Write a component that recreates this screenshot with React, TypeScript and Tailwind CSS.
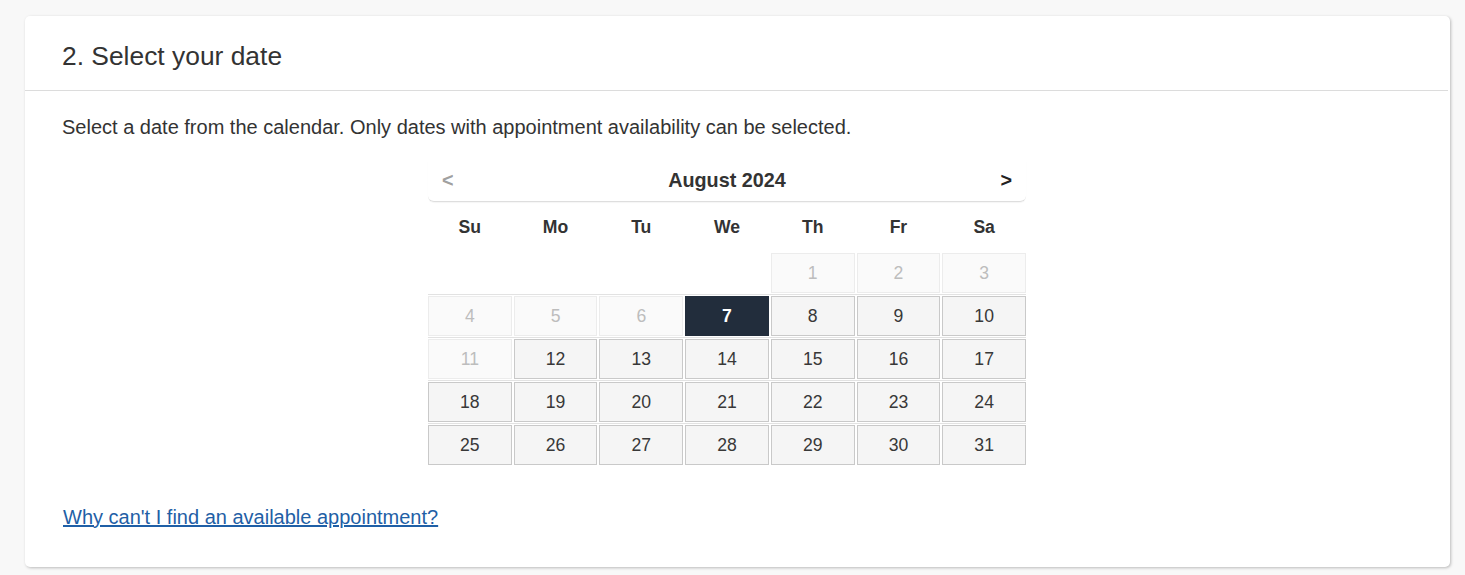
import React from "react";

type Cell = { d: number | null; state: "empty" | "disabled" | "avail" | "selected" };

const rows: Cell[][] = (() => {
  const out: Cell[][] = [];
  const cells: Cell[] = [];
  for (let i = 0; i < 4; i++) cells.push({ d: null, state: "empty" });
  for (let d = 1; d <= 31; d++) {
    let state: Cell["state"] = "avail";
    if (d <= 6 || d === 11) state = "disabled";
    if (d === 7) state = "selected";
    cells.push({ d, state });
  }
  for (let i = 0; i < cells.length; i += 7) out.push(cells.slice(i, i + 7));
  return out;
})();

const days = ["Su", "Mo", "Tu", "We", "Th", "Fr", "Sa"];

function DayCell({ c }: { c: Cell }) {
  if (c.state === "empty") return <div className="h-[40px]" />;
  if (c.state === "disabled")
    return (
      <div className="h-[40px] flex items-center justify-center border border-[#ececec] bg-[#fafafa] text-[#bdbdbd] text-[17.6px]">
        {c.d}
      </div>
    );
  if (c.state === "selected")
    return (
      <div className="h-[40px] flex items-center justify-center border border-[#222d3c] bg-[#222d3c] text-white font-bold text-[17.6px]">
        {c.d}
      </div>
    );
  return (
    <div className="h-[40px] flex items-center justify-center border border-[#c9c9c9] bg-[#f5f5f5] text-[#383838] text-[17.6px]">
      {c.d}
    </div>
  );
}

export default function App() {
  return (
    <div
      className="min-h-[575px] bg-[#f8f8f8] pt-[16px] pl-[25px] pr-[15px]"
      style={{ fontFamily: '"Liberation Sans", Arial, sans-serif' }}
    >
      <div className="w-[1425px] h-[551px] bg-white rounded-[5px] shadow-[1px_1px_3px_rgba(0,0,0,0.25)]">
        <div className="pl-[37px] pt-[25px] pb-[19px]">
          <h2 className="text-[26.4px] leading-[30px] text-[#333]">2. Select your date</h2>
        </div>
        <div className="h-px bg-[#dcdcdc] mr-[2px]" />
        <div className="pl-[37px] pt-[23px]">
          <p className="text-[20px] leading-[26px] text-[#333]">
            Select a date from the calendar. Only dates with appointment availability can be selected.
          </p>
          <div className="ml-[366px] mt-[20px] w-[598px]">
            <div className="h-[42px] flex items-center justify-between px-[14px] rounded-b-[6px] border-b border-[#dedede] shadow-[0_1px_1px_rgba(0,0,0,0.04)]">
              <span className="text-[19.8px] text-[#a0a0a0] font-bold w-[12px]">&lt;</span>
              <span className="text-[19.8px] font-bold text-[#333]">August 2024</span>
              <span className="text-[19.8px] text-[#222] font-bold w-[12px] text-right">&gt;</span>
            </div>
            <div className="grid grid-cols-7 gap-x-[2px] h-[51px] items-center">
              {days.map((d) => (
                <div key={d} className="text-center text-[17.6px] font-bold text-[#333]">
                  {d}
                </div>
              ))}
            </div>
            {rows.map((r, i) => (
              <div key={i}>
                {i > 0 && <div className="h-px bg-[#e2e2e2] my-[1px]" />}
                <div className="grid grid-cols-7 gap-x-[2px]">
                  {r.map((c, j) => (
                    <DayCell key={j} c={c} />
                  ))}
                </div>
              </div>
            ))}
          </div>
          <div className="mt-[40px]">
            <a href="#" className="text-[20px] leading-[24px] text-[#1f5fa6] underline ml-[1px]">
              Why can't I find an available appointment?
            </a>
          </div>
        </div>
      </div>
    </div>
  );
}
